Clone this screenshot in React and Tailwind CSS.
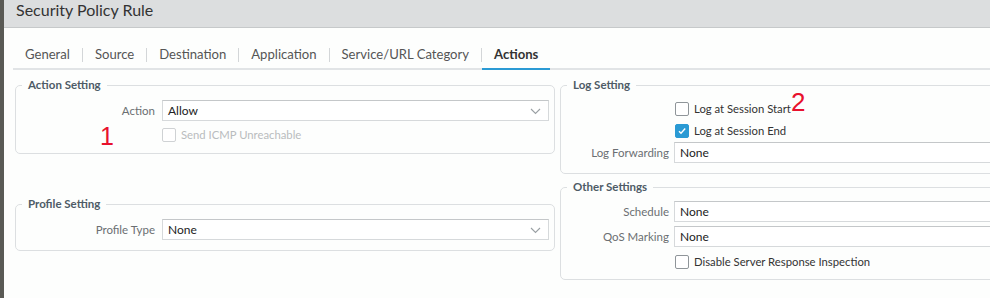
import React from 'react';

const tabs = ['General', 'Source', 'Destination', 'Application', 'Service/URL Category', 'Actions'];

const Chevron = () => (
  <svg width="11" height="7" viewBox="0 0 11 7" className="absolute right-[7px] top-[7px]">
    <path d="M1 1l4.5 4.5L10 1" fill="none" stroke="#9aa0a4" strokeWidth="1.1" />
  </svg>
);

const Select = ({ value, arrow, className = '' }) => (
  <div
    className={`relative h-[21px] border border-[#d6d9db] border-t-[#c4c7c9] bg-white pl-[5px] text-[12px] leading-[19px] text-[#222] ${className}`}
  >
    {value}
    {arrow && <Chevron />}
  </div>
);

const Checkbox = ({ checked, disabled, label }) => (
  <div className="flex items-center gap-[5px]">
    <span
      className={`flex h-[14px] w-[14px] items-center justify-center rounded-[2px] border ${
        checked ? 'border-[#2a9ad4] bg-[#2a9ad4]' : disabled ? 'border-[#cfd2d4] bg-white' : 'border-[#8f9599] bg-white'
      }`}
    >
      {checked && (
        <svg width="10" height="10" viewBox="0 0 10 10">
          <path d="M2 5.2l2 2L8.2 2.5" fill="none" stroke="white" strokeWidth="1.4" />
        </svg>
      )}
    </span>
    <span className={`text-[11.3px] leading-[14px] ${disabled ? 'text-[#b9bcbe]' : 'text-[#333]'}`}>{label}</span>
  </div>
);

const Group = ({ title, children, className = '' }) => (
  <fieldset className={`rounded-[5px] border border-[#dcdfe1] ${className}`}>
    <legend className="ml-[6px] px-[6px] text-[11.5px] font-bold leading-[12px] text-[#4e5b66]">{title}</legend>
    {children}
  </fieldset>
);

const Label = ({ children, w }) => (
  <span className={`${w} text-right text-[11.5px] text-[#6b6f72]`}>{children}</span>
);

export default function App() {
  return (
    <div className="relative flex h-[298px] w-[990px] overflow-hidden bg-[#fdfefd] font-['Lato','Open_Sans',sans-serif]">
      <div className="w-[4px] bg-[#5a5a55]" />
      <div className="flex min-w-0 flex-1 flex-col">
        <div className="h-[28px] border-b border-[#c6c9ca] bg-[#dcdedf] pl-[12px] text-[16px] leading-[19px] text-[#333]">
          Security Policy Rule
        </div>

        <div className="ml-[9px] mt-[13px] flex h-[29px] items-center border-b-2 border-[#e1e4e6]">
          {tabs.map((t, i) => (
            <React.Fragment key={t}>
              {i > 0 && <span className="h-[14px] w-px bg-[#d3d6d8]" />}
              <span
                className={`relative flex h-full items-center px-[12px] text-[13.1px] ${
                  t === 'Actions' ? 'font-bold text-[#333]' : 'text-[#555]'
                }`}
              >
                {t}
                {t === 'Actions' && <span className="absolute bottom-[-2px] left-0 right-0 h-[2px] bg-[#2a9ad4]" />}
              </span>
            </React.Fragment>
          ))}
        </div>

        <div className="mt-[9px] flex gap-[5px] pl-[11px]">
          <div className="flex w-[540px] shrink-0 flex-col">
            <Group title="Action Setting" className="pb-[11px] pt-[9px]">
              <div className="flex items-center gap-[7px]">
                <Label w="w-[139px]">Action</Label>
                <Select value="Allow" arrow className="mr-[5px] flex-1" />
              </div>
              <div className="mt-[7px] pl-[146px]">
                <Checkbox disabled label="Send ICMP Unreachable" />
              </div>
            </Group>

            <Group title="Profile Setting" className="mt-[44px] pb-[10px] pt-[9px]">
              <div className="flex items-center gap-[7px]">
                <Label w="w-[139px]">Profile Type</Label>
                <Select value="None" arrow className="mr-[5px] flex-1" />
              </div>
            </Group>
          </div>

          <div className="flex w-[470px] shrink-0 flex-col">
            <Group title="Log Setting" className="pb-[10px] pt-[11px]">
              <div className="flex flex-col gap-[8px] pl-[114px]">
                <Checkbox label="Log at Session Start" />
                <Checkbox checked label="Log at Session End" />
              </div>
              <div className="mt-[4px] flex items-center gap-[5px]">
                <Label w="w-[108px]">Log Forwarding</Label>
                <Select value="None" className="flex-1" />
              </div>
            </Group>

            <Group title="Other Settings" className="mt-[7px] pb-[10px] pt-[8px]">
              <div className="flex items-center gap-[5px]">
                <Label w="w-[108px]">Schedule</Label>
                <Select value="None" className="flex-1" />
              </div>
              <div className="mt-[4px] flex items-center gap-[5px]">
                <Label w="w-[108px]">QoS Marking</Label>
                <Select value="None" className="flex-1" />
              </div>
              <div className="mt-[8px] pl-[114px]">
                <Checkbox label="Disable Server Response Inspection" />
              </div>
            </Group>
          </div>
        </div>
      </div>

      <span className="absolute left-[100px] top-[122px] font-['Liberation_Sans',sans-serif] text-[25px] leading-[28px] text-[#e8112d]">
        1
      </span>
      <span className="absolute left-[791px] top-[88px] font-['Liberation_Sans',sans-serif] text-[26px] leading-[28px] text-[#e8112d]">
        2
      </span>
    </div>
  );
}
